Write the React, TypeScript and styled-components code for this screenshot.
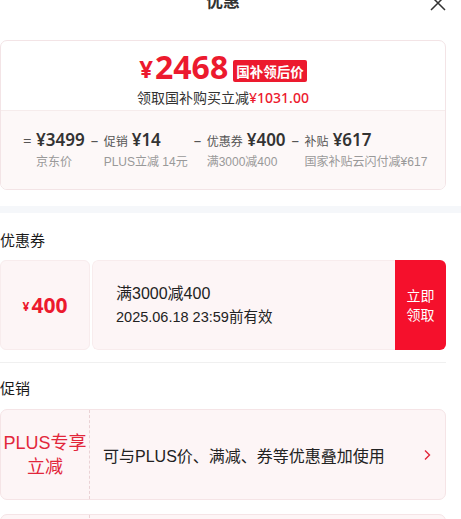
import { createGlobalStyle } from 'styled-components'
import styled from 'styled-components'

const GlobalStyle = createGlobalStyle`
  html, body {
    margin: 0;
    padding: 0;
    background: #fff;
  }
  body {
    font-family: 'Noto Sans CJK SC', 'Noto Sans', sans-serif;
    color: #1a1a1a;
    overflow: hidden;
  }
`

const RED = '#ec1a2e'
const NUM_FONT = `'Noto Sans', 'Noto Sans CJK SC', sans-serif`
const MIX_FONT = `'Liberation Sans', 'Noto Sans CJK SC', sans-serif`

const Page = styled.div`
  width: 461px;
  height: 519px;
  overflow: hidden;
`

const Header = styled.div`
  position: relative;
  width: 446px;
  height: 40px;
  margin-top: -21px;
  display: flex;
  align-items: center;
  justify-content: center;
`

const Title = styled.div`
  font-size: 17px;
  font-weight: 700;
  color: #333;
`

const CloseBtn = styled.div`
  position: absolute;
  right: 0;
  top: 13px;
  width: 16px;
  height: 16px;
`

const Section = styled.div<{ $top?: number }>`
  width: 446px;
  padding-top: ${({ $top }) => $top ?? 0}px;
`

const PriceCard = styled.div`
  border: 1px solid #f3e4e6;
  border-radius: 7px;
  overflow: hidden;
  background: #fff;
`

const PriceTop = styled.div`
  height: 70px;
  box-sizing: border-box;
  padding-top: 8px;
  display: flex;
  flex-direction: column;
  align-items: center;
  border-bottom: 1px solid #f6ecec;
`

const FinalRow = styled.div`
  display: flex;
  align-items: center;
  height: 36px;
  color: ${RED};
  font-family: ${NUM_FONT};
  font-weight: 700;
`

const Yen = styled.span<{ $size: number }>`
  font-size: ${({ $size }) => $size}px;
  line-height: 1;
  margin-right: 2px;
  margin-top: 3px;
`

const BigNum = styled.span`
  font-size: 32px;
  line-height: 36px;
`

const Badge = styled.span`
  margin-left: 5px;
  margin-top: 7px;
  height: 22px;
  padding: 0 3px;
  display: flex;
  align-items: center;
  border-radius: 2px;
  background: ${RED};
  color: #fff;
  font-family: 'Noto Sans CJK SC', sans-serif;
  font-size: 13.5px;
  font-weight: 700;
`

const SaveLine = styled.div`
  margin-top: 2px;
  font-size: 14px;
  line-height: 20px;
  color: #333;
`

const SaveAmount = styled.span`
  color: ${RED};
  font-family: ${NUM_FONT};
  font-weight: 500;
  font-size: 14px;
`

const Breakdown = styled.div`
  display: flex;
  gap: 6px;
  padding: 18px 0 18px 22px;
  background: #fdf8f8;
`

const Col = styled.div`
  display: flex;
`

const Op = styled.span`
  width: 13px;
  font-size: 15px;
  line-height: 22px;
  color: #555;
  font-family: 'Noto Sans', sans-serif;
`

const ColStack = styled.div`
  display: flex;
  flex-direction: column;
`

const ColTop = styled.div`
  display: flex;
  align-items: baseline;
  gap: 4px;
  height: 22px;
`

const SmallLabel = styled.span`
  font-size: 12px;
  color: #555;
`

const Amount = styled.span`
  font-family: ${NUM_FONT};
  font-size: 17px;
  font-weight: 600;
  line-height: 22px;
  color: #333;
`

const SubLabel = styled.div`
  margin-top: 2px;
  font-family: ${MIX_FONT};
  font-size: 12px;
  line-height: 18px;
  color: #999;
  white-space: nowrap;
`

const Band = styled.div`
  height: 7px;
  margin-top: 16px;
  background: #f5f7fa;
`

const Heading = styled.div<{ $mt: number }>`
  margin-top: ${({ $mt }) => $mt}px;
  font-size: 15px;
  line-height: 22px;
  color: #1a1a1a;
`

const Coupon = styled.div`
  margin-top: 9px;
  height: 90px;
  display: flex;
  gap: 2px;
`

const CouponValue = styled.div`
  width: 90px;
  display: flex;
  align-items: center;
  justify-content: center;
  background: #fdf5f6;
  border: 1px solid #f8eced;
  border-radius: 6px;
  box-sizing: border-box;
  color: ${RED};
  font-family: ${NUM_FONT};
  font-weight: 700;
`

const CouponValueNum = styled.span`
  font-size: 21px;
`

const CouponBody = styled.div`
  flex: 1;
  display: flex;
  border-radius: 6px;
  overflow: hidden;
`

const CouponInfo = styled.div`
  flex: 1;
  display: flex;
  flex-direction: column;
  justify-content: center;
  padding-left: 23px;
  background: #fdf5f6;
  border: 1px solid #f8eced;
  border-right: none;
  border-radius: 6px 0 0 6px;
  color: #222;
  font-family: ${MIX_FONT};
`

const CouponRule = styled.div`
  font-size: 16px;
  line-height: 22px;
`

const CouponDate = styled.div`
  font-size: 14.5px;
  line-height: 22px;
  margin-top: 1px;
`

const TakeBtn = styled.div`
  width: 51px;
  display: flex;
  align-items: center;
  justify-content: center;
  text-align: center;
  background: #f5102c;
  color: #fff;
  font-size: 14px;
  line-height: 19px;
`

const Divider = styled.div`
  margin-top: 12px;
  height: 1px;
  background: #f0f0f0;
`

const Promo = styled.div<{ $mt: number }>`
  margin-top: ${({ $mt }) => $mt}px;
  height: 91px;
  display: flex;
  box-sizing: border-box;
  border: 1px solid #f5e4e6;
  border-radius: 7px;
  background: #fdf5f6;
`

const PromoTag = styled.div`
  width: 88px;
  display: flex;
  align-items: center;
  justify-content: center;
  text-align: center;
  border-right: 1px dashed #ead2d5;
  color: #e2263a;
  font-family: ${MIX_FONT};
  font-size: 18px;
  line-height: 24px;
`

const PromoText = styled.div`
  flex: 1;
  display: flex;
  align-items: center;
  padding: 0 14px 0 13px;
  font-family: ${MIX_FONT};
  font-size: 16px;
  color: #222;
`

const PromoDesc = styled.span`
  flex: 1;
`

const steps = [
  { op: '=', label: '', amount: '3499', sub: '京东价' },
  { op: '–', label: '促销', amount: '14', sub: 'PLUS立减 14元' },
  { op: '–', label: '优惠券', amount: '400', sub: '满3000减400' },
  { op: '–', label: '补贴', amount: '617', sub: '国家补贴云闪付减¥617' },
]

const Chevron = () => (
  <svg width="8" height="12" viewBox="0 0 8 12">
    <path d="M2 1.5 L6.5 6 L2 10.5" fill="none" stroke="#e2263a" strokeWidth="1.4" />
  </svg>
)

export default function App() {
  return (
    <Page>
      <GlobalStyle />
      <Header>
        <Title>优惠</Title>
        <CloseBtn>
          <svg width="16" height="16" viewBox="0 0 16 16">
            <path d="M1 1 L15 15 M15 1 L1 15" stroke="#333" strokeWidth="1.5" />
          </svg>
        </CloseBtn>
      </Header>
      <Section $top={21}>
        <PriceCard>
          <PriceTop>
            <FinalRow>
              <Yen $size={24}>¥</Yen>
              <BigNum>2468</BigNum>
              <Badge>国补领后价</Badge>
            </FinalRow>
            <SaveLine>
              领取国补购买立减<SaveAmount>¥1031.00</SaveAmount>
            </SaveLine>
          </PriceTop>
          <Breakdown>
            {steps.map((s) => (
              <Col key={s.sub}>
                <Op>{s.op}</Op>
                <ColStack>
                  <ColTop>
                    {s.label && <SmallLabel>{s.label}</SmallLabel>}
                    <Amount>¥{s.amount}</Amount>
                  </ColTop>
                  <SubLabel>{s.sub}</SubLabel>
                </ColStack>
              </Col>
            ))}
          </Breakdown>
        </PriceCard>
      </Section>
      <Band />
      <Section>
        <Heading $mt={16}>优惠券</Heading>
        <Coupon>
          <CouponValue>
            <Yen $size={12}>¥</Yen>
            <CouponValueNum>400</CouponValueNum>
          </CouponValue>
          <CouponBody>
            <CouponInfo>
              <CouponRule>满3000减400</CouponRule>
              <CouponDate>2025.06.18 23:59前有效</CouponDate>
            </CouponInfo>
            <TakeBtn>
              立即
              <br />
              领取
            </TakeBtn>
          </CouponBody>
        </Coupon>
        <Divider />
        <Heading $mt={14}>促销</Heading>
        <Promo $mt={10}>
          <PromoTag>
            PLUS专享
            <br />
            立减
          </PromoTag>
          <PromoText>
            <PromoDesc>可与PLUS价、满减、券等优惠叠加使用</PromoDesc>
            <Chevron />
          </PromoText>
        </Promo>
        <Promo $mt={14}>
          <PromoTag />
          <PromoText />
        </Promo>
      </Section>
    </Page>
  )
}
